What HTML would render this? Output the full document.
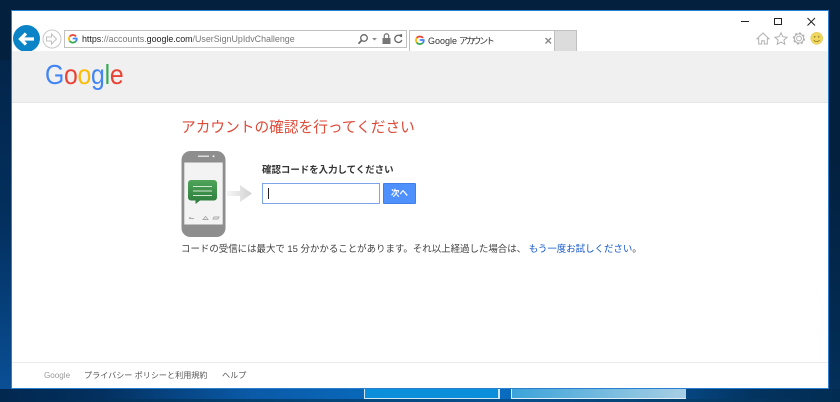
<!DOCTYPE html>
<html lang="ja">
<head>
<meta charset="utf-8">
<title>Google アカウント</title>
<style>
html,body{margin:0;padding:0;width:840px;height:402px;overflow:hidden;background:#03203f;}
body{position:relative;font-family:"Liberation Sans","Noto Sans CJK JP",sans-serif;}
.a{position:absolute;white-space:nowrap;}
svg{position:absolute;overflow:visible;}
</style>
</head>
<body>
<!-- desktop -->
<div class="a" style="left:0;top:0;width:840px;height:402px;background:linear-gradient(180deg,#03203f 0,#03203f 40%,#03305a 100%)"></div>
<div class="a" style="left:0;top:60px;width:11px;height:330px;background:linear-gradient(180deg,#03254a 0,#03305f 50%,#0a4f96 100%)"></div>
<div class="a" style="left:0;top:389px;width:840px;height:13px;background:linear-gradient(90deg,#02284f 0,#03305f 12%,#0a5aa8 30%,#0a69bb 45%,#0a6cc0 60%,#05457f 82%,#03335f 90%,#022c52 100%)"></div>
<div class="a" style="left:0;top:399px;width:840px;height:3px;background:linear-gradient(90deg,#02284f 0,#03406f 30%,#06508f 60%,#04406f 80%,#022c52 100%)"></div>
<div class="a" style="left:364px;top:388px;width:136px;height:11px;background:#0b8fdb;border-left:1px solid #cfe8f5;border-bottom:1px solid #cfe8f5;border-right:2px solid #cfe8f5;box-sizing:border-box"></div>
<div class="a" style="left:511px;top:388px;width:175px;height:11px;background:linear-gradient(90deg,#3ba3d9,#a8cfe4);border-left:1px solid #e0f0f8;border-bottom:1px solid #e0f0f8;box-sizing:border-box"></div>

<!-- window -->
<div class="a" style="left:11px;top:10px;width:818px;height:379px;background:#fff;border:1px solid #2a7fcf;box-sizing:border-box"></div>
<!-- page header -->
<div class="a" style="left:12px;top:51px;width:816px;height:51px;background:#f0f0f0;border-bottom:1px solid #e6e6e6;box-sizing:content-box"></div>

<!-- window controls -->
<div class="a" style="left:741px;top:21px;width:8px;height:1px;background:#222"></div>
<div class="a" style="left:774px;top:18px;width:8px;height:7px;border:1px solid #222;box-sizing:border-box"></div>

<!-- tabs -->
<div class="a" style="left:409px;top:30px;width:146px;height:21px;background:#fff;border:1px solid #c0c0c0;border-bottom:0;box-sizing:border-box"></div>
<div class="a" style="left:555px;top:30px;width:22px;height:21px;background:#dcdcdc;border:1px solid #c0c0c0;border-left:0;border-bottom:0;box-sizing:border-box"></div>

<svg style="left:0;top:0" width="840" height="402">
<defs>
<clipPath id="bk"><rect x="0" y="0" width="60" height="51"/></clipPath>
<linearGradient id="arrow" x1="0" x2="1" y1="0" y2="0"><stop offset="0" stop-color="#f6f6f6"/><stop offset="1" stop-color="#d2d2d2"/></linearGradient>
<linearGradient id="msg" x1="0" x2="0" y1="0" y2="1"><stop offset="0" stop-color="#4fa55a"/><stop offset="1" stop-color="#2a7a3a"/></linearGradient>
</defs>
<path d="M807.500 18l7.500 7.500M815 18l-7.500 7.500" stroke="#222" stroke-width="1" fill="none"/>

<!-- back button -->
<circle cx="26.500" cy="38.500" r="13.500" fill="#0a84c6" clip-path="url(#bk)"/>
<path d="M20 39h14M26 33.500l-5.500 5.500 5.500 5.500" stroke="#fff" stroke-width="3.200" fill="none"/>
<!-- forward button -->
<circle cx="52" cy="39" r="9" fill="#fff" stroke="#c8c8c8"/>
<path d="M46.500 37h5v-3l5 5-5 5v-3h-5z" fill="#fff" stroke="#c0c0c0"/>
<!-- address bar -->
<rect x="64.500" y="30.500" width="342" height="17" fill="#fff" stroke="#c0c0c0"/>
<!-- favicon -->
<g fill="none" stroke-width="1.800">
<path d="M76 36.500a4 4 0 0 0-6.300 0" stroke="#ea4335"/>
<path d="M69.700 36.500a4 4 0 0 0 0 4.500" stroke="#fbbc05"/>
<path d="M69.700 41a4 4 0 0 0 6 .5" stroke="#34a853"/>
<path d="M75.700 41.500a3.600 3.600 0 0 0 1-3h-4" stroke="#4285f4"/>
</g>
<!-- search -->
<circle cx="364" cy="38" r="3.300" fill="none" stroke="#666" stroke-width="1.300"/>
<path d="M361.500 40.500l-3 3.200" stroke="#666" stroke-width="1.700"/>
<path d="M372 38h5l-2.500 2.500z" fill="#888"/>
<!-- lock -->
<rect x="382.500" y="38" width="8" height="6" fill="#777"/>
<path d="M384.300 38v-2a2.200 2.200 0 0 1 4.400 0v2" fill="none" stroke="#777" stroke-width="1.300"/>
<!-- refresh -->
<path d="M401.500 37a3.600 3.600 0 1 0 .3 3" fill="none" stroke="#666" stroke-width="1.300"/>
<path d="M399.500 34.500l2.600-.5v3.400z" fill="#666"/>

<!-- tab favicon -->
<g fill="none" stroke-width="1.800">
<path d="M423 38a4 4 0 0 0-6.300 0" stroke="#ea4335"/>
<path d="M416.700 38a4 4 0 0 0 0 4.500" stroke="#fbbc05"/>
<path d="M416.700 42.500a4 4 0 0 0 6 .5" stroke="#34a853"/>
<path d="M422.700 43a3.600 3.600 0 0 0 1-3h-4" stroke="#4285f4"/>
</g>
<path d="M545.500 38l5.500 5.500M551 38l-5.500 5.500" stroke="#888" stroke-width="1.400"/>

<!-- toolbar icons -->
<path d="M763 33l-6 5.800h1.700v5.200h3v-3.300h2.600v3.300h3v-5.200h1.700z" fill="#fff" stroke="#b0b0b0"/>
<path d="M781 32.800l1.800 3.900 4.300.5-3.200 2.900 .9 4.200-3.800-2.200-3.800 2.200 .9-4.200-3.200-2.900 4.300-.5z" fill="#fff" stroke="#b0b0b0"/>
<circle cx="799" cy="38.500" r="2.400" fill="#fff" stroke="#b0b0b0"/>
<circle cx="799" cy="38.500" r="4.600" fill="none" stroke="#b0b0b0" stroke-width="1"/>
<circle cx="799" cy="38.500" r="5.500" fill="none" stroke="#b0b0b0" stroke-width="1.200" stroke-dasharray="2.200 2.100"/>
<circle cx="816.700" cy="38.300" r="6" fill="#f0d65e" stroke="#e2cc62" stroke-width=".6"/>
<circle cx="814.700" cy="36.800" r=".8" fill="#8a7a20"/>
<circle cx="818.700" cy="36.800" r=".8" fill="#8a7a20"/>
<path d="M813.700 40.300q3 2.400 6 0" fill="none" stroke="#8a7a20" stroke-width=".8"/>

<!-- phone -->
<rect x="181.500" y="151" width="44" height="86" rx="9" fill="#8e8e8e"/>
<rect x="184.300" y="162.500" width="38.400" height="62" fill="#f3f3f3"/>
<rect x="198" y="155.500" width="11" height="1.500" fill="#ddd"/>
<circle cx="213.500" cy="156.300" r="1" fill="#eee"/>
<path d="M191 180h23a3 3 0 0 1 3 3v14.500a3 3 0 0 1-3 3h-14l-4.500 3.500v-3.500h-4.500a3 3 0 0 1-3-3v-14.500a3 3 0 0 1 3-3z" fill="url(#msg)"/>
<path d="M193 186.500h19M193 191h19M193 195.500h19" stroke="#cfe8cf" stroke-width="1"/>
<path d="M189 218.500h5M189 218.500l1.500-1.500M203 219.500l2.500-3 2.500 3zM213 219h5l1-2h-5z" fill="none" stroke="#aaa" stroke-width=".9"/>
<path d="M227 191h13v-6l12 8.500-12 8.500v-6h-13z" fill="url(#arrow)"/>
</svg>

<!-- address text -->
<div class="a" style="left:82px;top:33px;font-size:8.900px;line-height:13px;color:#777"><span style="color:#222">https</span>://accounts.<span style="color:#222">google.com</span>/UserSignUpIdvChallenge</div>

<div class="a" style="left:428px;top:34px;font-size:9px;line-height:14px;color:#333">Google<span style="font-size:9px;letter-spacing:-2.300px;margin-left:2px">アカウント</span></div>

<!-- Google logo -->
<div class="a" style="left:45px;top:58px;font-size:28px;line-height:34px;letter-spacing:-.3px;transform-origin:0 0;transform:scaleX(.885)"><span style="color:#4285f4">G</span><span style="color:#ea4335">o</span><span style="color:#fbbc05">o</span><span style="color:#4285f4">g</span><span style="color:#34a853">l</span><span style="color:#ea4335">e</span></div>

<!-- content -->
<div class="a" style="left:181px;top:118px;font-size:14.700px;line-height:20px;color:#dd4b39">アカウントの確認を行ってください</div>
<div class="a" style="left:262px;top:164px;font-size:9.450px;line-height:14px;font-weight:700;color:#333">確認コードを入力してください</div>
<div class="a" style="left:262px;top:183px;width:118px;height:21px;background:#fff;border:1px solid #7ca6e8;box-sizing:border-box"></div>
<div class="a" style="left:268px;top:188px;width:1px;height:11px;background:#222"></div>
<div class="a" style="left:383px;top:183px;width:33px;height:21px;background:#4d90fe;border:1px solid #3f7fe6;box-sizing:border-box;border-radius:1px;color:#fff;font-size:8.500px;font-weight:700;line-height:19px;text-align:center">次へ</div>
<div class="a" style="left:181px;top:243px;font-size:9.450px;line-height:14px;color:#404040">コードの受信には最大で 15 分かかることがあります。それ以上経過した場合は、<span style="color:#15c"> もう一度お試しください</span>。</div>

<!-- footer -->
<div class="a" style="left:12px;top:362px;width:816px;height:1px;background:#ebebeb"></div>
<div class="a" style="left:44px;top:369px;font-size:8.100px;line-height:14px;color:#9a9a9a">Google</div>
<div class="a" style="left:84px;top:369px;font-size:8.100px;line-height:14px;color:#555">プライバシー ポリシーと利用規約</div>
<div class="a" style="left:222px;top:369px;font-size:8.100px;line-height:14px;color:#555">ヘルプ</div>
</body>
</html>
